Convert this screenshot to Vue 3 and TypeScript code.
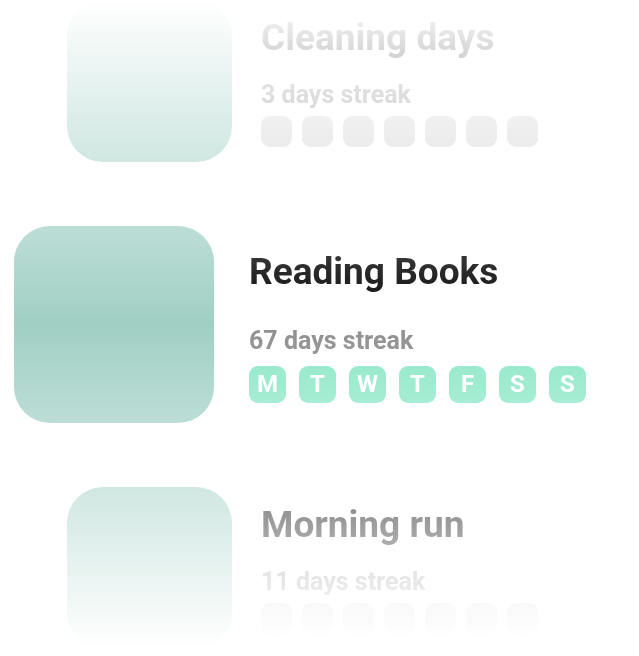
<script setup lang="ts">
interface Habit {
  id: number
  name: string
  streak: number
  active: boolean
}

const days: string[] = ['M', 'T', 'W', 'T', 'F', 'S', 'S']

const habits: Habit[] = [
  { id: 1, name: 'Cleaning days', streak: 3, active: false },
  { id: 2, name: 'Reading Books', streak: 67, active: true },
  { id: 3, name: 'Morning run', streak: 11, active: false },
]
</script>

<template>
  <main class="habits">
    <article
      v-for="habit in habits"
      :key="habit.id"
      class="habit"
      :class="{ active: habit.active }"
    >
      <div class="cover"></div>
      <div class="info">
        <h2 class="name">{{ habit.name }}</h2>
        <p class="streak">{{ habit.streak }} days streak</p>
        <ul class="week">
          <li v-for="(day, i) in days" :key="i" class="day">
            <template v-if="habit.active">{{ day }}</template>
          </li>
        </ul>
      </div>
    </article>
  </main>
</template>

<style>
body {
  background: #fff;
}
</style>

<style scoped>
.habits {
  display: flex;
  flex-direction: column;
  gap: 64px;
  font-family: Roboto, 'Liberation Sans', sans-serif;
  font-weight: 700;
  -webkit-mask-image: linear-gradient(to bottom, transparent, #000 50%, transparent);
  mask-image: linear-gradient(to bottom, transparent, #000 50%, transparent);
}

.habit {
  display: flex;
  gap: 29px;
  padding-left: 67px;
}

.habit.active {
  gap: 35px;
  padding-left: 14px;
}

.cover {
  flex: none;
  width: 165px;
  height: 162px;
  border-radius: 36px;
  background: #a0cfc4;
}

.active .cover {
  width: 200px;
  height: 197px;
}

.info {
  padding-top: 16px;
}

.active .info {
  padding-top: 24px;
}

.name {
  margin: 0 0 21px;
  font-size: 37px;
  line-height: 44px;
  font-weight: 700;
  color: #000;
  white-space: nowrap;
}

.active .name {
  margin-bottom: 33px;
}

.streak {
  margin: 0 0 7px;
  font-size: 25px;
  line-height: 28px;
  color: #8e8e8e;
  white-space: nowrap;
}

.active .streak {
  margin-bottom: 11px;
}

.week {
  display: flex;
  gap: 10px;
  margin: 0;
  padding: 0;
  list-style: none;
}

.active .week {
  gap: 13px;
}

.day {
  width: 31px;
  height: 31px;
  border-radius: 9px;
  background: #d5d5d5;
  color: #fff;
  font-size: 24px;
  line-height: 36px;
  text-align: center;
}

.active .day {
  width: 37px;
  height: 37px;
  background: #8ae7c5;
}
</style>
